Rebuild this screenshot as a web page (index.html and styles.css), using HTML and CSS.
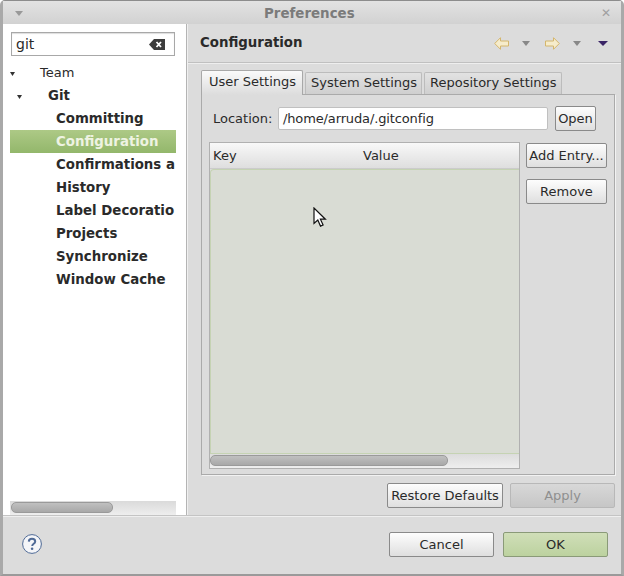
FILE: index.html
```html
<!DOCTYPE html>
<html lang="en">
<head>
	<meta charset="UTF-8">
	<title>Preferences</title>
	<link rel="stylesheet" href="styles.css">
</head>
<body>
	<div class="window">
		<div class="titlebar">
			<svg class="menu-arrow" width="12" height="8" viewBox="0 0 12 8"><path d="M2 2h8L6 7z" fill="#999"/></svg>
			<span class="title">Preferences</span>
			<span class="close">✕</span>
		</div>
		<div class="main">
			<div class="sidebar">
				<div class="search">
					<span class="search-text">git</span>
					<svg width="16" height="11" viewBox="0 0 16 11"><path d="M5 0h11v11H5L0 5.500z" fill="#3c3c3c"/><path d="M7.500 3l4.500 5M12 3L7.500 8" stroke="#fff" stroke-width="1.800"/></svg>
				</div>
				<ul class="tree">
					<li class="node node-team"><svg class="twist" width="5" height="4" viewBox="0 0 5 4"><path d="M0 0h5L2.500 4z" fill="#333"/></svg>Team</li>
					<li class="node node-git"><svg class="twist" width="5" height="4" viewBox="0 0 5 4"><path d="M0 0h5L2.500 4z" fill="#333"/></svg>Git</li>
					<li class="node leaf">Committing</li>
					<li class="node leaf selected">Configuration</li>
					<li class="node leaf">Confirmations a</li>
					<li class="node leaf">History</li>
					<li class="node leaf">Label Decoratio</li>
					<li class="node leaf">Projects</li>
					<li class="node leaf">Synchronize</li>
					<li class="node leaf">Window Cache</li>
				</ul>
				<div class="side-scroll"><div class="thumb side-thumb"></div></div>
			</div>
			<div class="content">
				<div class="page-head">
					<span class="page-title">Configuration</span>
					<div class="nav-icons">
						<svg width="15" height="13" viewBox="0 0 15 13"><path d="M.7 6.500L6.500.7v3.300h8v5h-8v3.300z" fill="#f6eccb" stroke="#d4b66c"/></svg>
						<svg class="nav-drop" width="8" height="5" viewBox="0 0 8 5"><path d="M0 0h8L4 5z" fill="#888"/></svg>
						<svg class="nav-next" width="15" height="13" viewBox="0 0 15 13"><path d="M14.300 6.500L8.500.7v3.300h-8v5h8v3.300z" fill="#f6eccb" stroke="#d4b66c"/></svg>
						<svg class="nav-drop" width="8" height="5" viewBox="0 0 8 5"><path d="M0 0h8L4 5z" fill="#888"/></svg>
						<svg class="nav-menu" width="10" height="5" viewBox="0 0 10 5"><path d="M0 0h10L5 5z" fill="#3a2566"/></svg>
					</div>
				</div>
				<div class="page-body">
					<div class="tabs">
						<span class="tab active">User Settings</span>
						<span class="tab">System Settings</span>
						<span class="tab">Repository Settings</span>
					</div>
					<div class="folder">
						<div class="location">
							<label class="loc-label">Location:</label>
							<div class="loc-input">/home/arruda/.gitconfig</div>
							<button class="btn btn-open">Open</button>
						</div>
						<div class="table-row">
							<div class="table">
								<div class="table-head">
									<span class="col-key">Key</span>
									<span>Value</span>
								</div>
								<div class="table-body"></div>
								<div class="table-scroll"><div class="thumb table-thumb"></div></div>
							</div>
							<div class="side-buttons">
								<button class="btn btn-side">Add Entry...</button>
								<button class="btn btn-side">Remove</button>
							</div>
						</div>
					</div>
					<div class="page-buttons">
						<button class="btn btn-restore">Restore Defaults</button>
						<button class="btn btn-apply" disabled>Apply</button>
					</div>
				</div>
			</div>
		</div>
		<div class="footer">
			<svg class="help" width="20" height="20" viewBox="0 0 20 20"><circle cx="10" cy="10" r="9.400" fill="#f4f5f8" stroke="#4f6a96"/><path d="M6.800 7.600C6.900 5.700 8.300 4.800 10 4.800c1.900 0 3.200 1 3.200 2.600 0 2.400-3 2.300-3 4.600" fill="none" stroke="#4f6a96" stroke-width="2"/><circle cx="10.100" cy="14.800" r="1.300" fill="#4f6a96"/></svg>
			<div class="footer-buttons">
				<button class="btn btn-foot">Cancel</button>
				<button class="btn btn-foot btn-ok">OK</button>
			</div>
		</div>
		<svg class="cursor" width="15" height="21" viewBox="0 0 15 21"><path d="M1 1v15.500l3.800-3.400 2.700 6 2.600-1.100-2.700-5.800h5z" fill="#fff" stroke="#111" stroke-width="1.200"/></svg>
	</div>
</body>
</html>
```

FILE: styles.css
```css
*{
	margin: 0;
	padding: 0;
	box-sizing: border-box;
}
body{
	width: 624px;
	height: 576px;
	overflow: hidden;
	background: #fff;
	font-family: "DejaVu Sans", sans-serif;
	font-size: 13px;
	color: #2a2a2a;
}
.window{
	position: relative;
	width: 624px;
	height: 576px;
	display: flex;
	flex-direction: column;
	background: #dcdcdc;
	border: 3px solid #a9a9a9;
	border-top: 1px solid #8c8c8c;
	border-bottom: 2px solid #9a9a9a;
	border-radius: 5px 5px 0 0;
}

/* title bar */
.titlebar{
	height: 23px;
	flex: none;
	display: flex;
	align-items: center;
	padding-left: 10px;
	background: linear-gradient(#e2e2e2, #d2d2d2);
}
.menu-arrow{
	flex: none;
}
.title{
	margin-left: 239px;
	padding-top: 1px;
	font-size: 13.400px;
	font-weight: bold;
	color: #7b7b7b;
}
.close{
	margin-left: auto;
	margin-right: 10px;
	padding-top: 1px;
	font-size: 12px;
	font-weight: bold;
	color: #a0a0a0;
}

.main{
	height: 491px;
	flex: none;
	display: flex;
}

/* left tree */
.sidebar{
	width: 184px;
	flex: none;
	display: flex;
	flex-direction: column;
	background: #fff;
	border-right: 1px solid #b4b4b4;
	padding: 8px 10px 0 7px;
}
.search{
	height: 24px;
	margin: 0 1px;
	flex: none;
	display: flex;
	align-items: center;
	justify-content: space-between;
	padding: 0 9px 0 4px;
	border: 1px solid #a8a8a8;
	box-shadow: inset 0 1px 1px #ddd;
	font-size: 14px;
}
.tree{
	flex: 1;
	list-style: none;
	overflow: hidden;
	padding-top: 5px;
}
.node{
	height: 23px;
	line-height: 23px;
	white-space: nowrap;
	overflow: hidden;
	font-size: 13.330px;
	font-weight: bold;
}
.twist{
	vertical-align: 1px;
}
.node-team{
	font-weight: normal;
	font-size: 13px;
}
.node-team .twist{
	margin-right: 25px;
}
.node-git{
	padding-left: 7px;
}
.node-git .twist{
	margin-right: 26px;
}
.leaf{
	padding-left: 46px;
}
.selected{
	color: #eef3e2;
	background: linear-gradient(#adc986, #93b76b);
}
.side-scroll{
	height: 14px;
	flex: none;
	padding: 1px;
	background: linear-gradient(#dadada, #eeeeee);
}
.thumb{
	height: 11px;
	border: 1px solid #9a9a9a;
	border-radius: 5px;
	background: linear-gradient(#c0c0c0, #a8a8a8);
}
.side-thumb{
	width: 102px;
}

/* right side */
.content{
	flex: 1;
	display: flex;
	flex-direction: column;
	border-left: 1px solid #f0f0f0;
}
.page-head{
	height: 39px;
	flex: none;
	display: flex;
	align-items: center;
	justify-content: space-between;
	padding: 0 13px 2px 12px;
	border-bottom: 1px solid #c0c0c0;
	box-shadow: 0 1px 0 #eee;
}
.page-title{
	font-size: 13.330px;
	font-weight: bold;
}
.nav-icons{
	display: flex;
	align-items: center;
	margin-top: 3px;
}
.nav-drop{
	margin-left: 13px;
}
.nav-next{
	margin-left: 15px;
}
.nav-menu{
	margin-left: 17px;
}
.page-body{
	flex: 1;
	display: flex;
	flex-direction: column;
	padding: 7px 6px 0 13px;
}
.tabs{
	height: 24px;
	flex: none;
	display: flex;
	align-items: flex-end;
	gap: 2px;
}
.tab{
	height: 22px;
	line-height: 19px;
	padding: 0 4px 0 5px;
	border: 1px solid #bcbcbc;
	border-bottom: none;
	border-radius: 2px 2px 0 0;
	background: linear-gradient(#e2e2e2, #cfcfcf);
}
.tab.active{
	height: 25px;
	line-height: 21px;
	padding: 0 6px 0 7px;
	border-color: #a8a8a8;
	background: linear-gradient(#fafafa, #dcdcdc);
	position: relative;
	top: 1px;
}
.folder{
	height: 381px;
	flex: none;
	padding: 11px 7px 6px 7px;
	border: 1px solid #aaa;
	box-shadow: 1px 1px 0 #f2f2f2;
}
.location{
	height: 25px;
	display: flex;
	align-items: center;
}
.loc-label{
	margin-left: 4px;
	width: 65px;
	flex: none;
}
.loc-input{
	width: 270px;
	height: 23px;
	line-height: 21px;
	padding-left: 4px;
	background: #fff;
	border: 1px solid #c0c0c0;
	border-radius: 2px;
	letter-spacing: -0.130px;
}
.btn{
	font-family: inherit;
	font-size: 13px;
	color: #2a2a2a;
	height: 25px;
	padding: 0;
	white-space: nowrap;
	border: 1px solid #8a8a8a;
	border-radius: 2px;
	background: linear-gradient(#fdfdfd, #dfdfdf);
}
.btn-open{
	width: 41px;
	margin-left: 7px;
}
.table-row{
	display: flex;
	margin-top: 11px;
	gap: 6px;
}
.table{
	width: 311px;
	height: 327px;
	flex: none;
	display: flex;
	flex-direction: column;
	border: 1px solid #b0b0b0;
}
.table-head{
	height: 26px;
	flex: none;
	display: flex;
	align-items: center;
	padding-left: 3px;
	background: linear-gradient(#f8f8f8, #dedede);
	border-bottom: 1px solid #cbcbcb;
}
.col-key{
	width: 150px;
}
.table-body{
	flex: 1;
	background: #d9dcd4;
	border: 1px solid #c5d3b3;
	border-right: none;
	border-radius: 4px 0 0 0;
}
.table-scroll{
	height: 14px;
	flex: none;
	padding: 1px 0;
	background: linear-gradient(#dcdcdc, #eeeeee);
}
.table-thumb{
	width: 238px;
}
.side-buttons{
	display: flex;
	flex-direction: column;
	gap: 11px;
	padding-top: 1px;
}
.btn-side{
	width: 81px;
}
.page-buttons{
	display: flex;
	justify-content: flex-end;
	gap: 7px;
	margin-top: 8px;
}
.btn-restore{
	width: 116px;
}
.btn-apply{
	width: 105px;
	color: #8f8f8f;
	border-color: #b8b8b8;
	background: linear-gradient(#d8d8d8, #c6c6c6);
}

/* bottom bar */
.footer{
	flex: 1;
	display: flex;
	align-items: center;
	justify-content: space-between;
	padding: 0 13px 2px 19px;
	border-top: 1px solid #c4c4c4;
	box-shadow: inset 0 1px 0 #efefef;
}
.help{
	margin-bottom: 1px;
}
.footer-buttons{
	display: flex;
	gap: 9px;
}
.btn-foot{
	width: 105px;
}
.btn-ok{
	background: linear-gradient(#d0deb8, #bcd29f);
	border-color: #8a9a78;
}

.cursor{
	position: absolute;
	left: 310px;
	top: 206px;
}
```
